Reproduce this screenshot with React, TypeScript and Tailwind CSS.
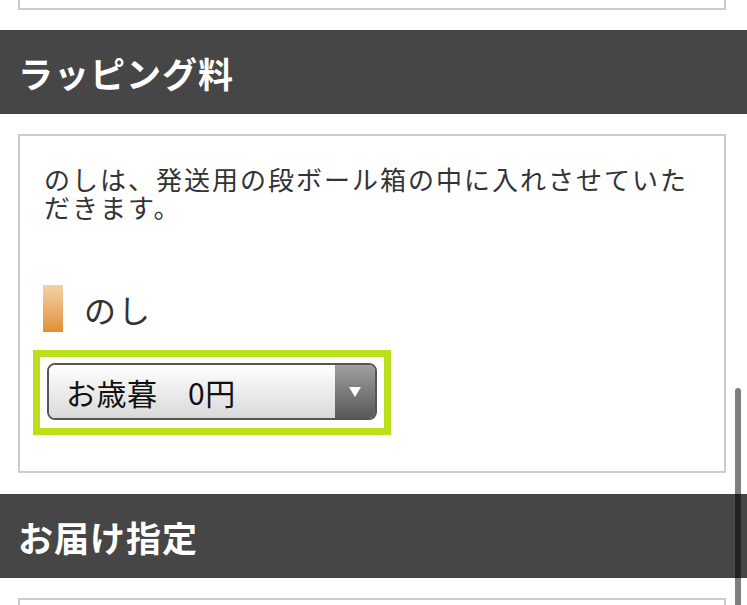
import { useState } from 'react'

const jp = { fontFamily: '"Noto Sans CJK JP", "Noto Sans", sans-serif' }

function SectionHeader({ title }: { title: string }) {
  return (
    <div className="h-[84px] bg-[#464646] flex items-center px-[18px]">
      <h2 className="text-[35px] font-bold text-white tracking-[1px] leading-none">{title}</h2>
    </div>
  )
}

function App() {
  const [noshi] = useState('お歳暮　0円')

  return (
    <div className="relative w-[747px] h-[605px] overflow-hidden bg-white" style={jp}>
      {/* 前のボックスの下端 */}
      <div className="ml-[18px] mr-[21px] h-[10px] border-2 border-t-0 border-[#cccccc]"></div>

      <div className="mt-[20px]">
        <SectionHeader title="ラッピング料" />
      </div>

      <div className="mt-[20px] ml-[18px] mr-[21px] h-[339px] border-2 border-[#cccccc] pt-[29px] px-[24px]">
        <p className="text-[26px] leading-[28px] tracking-[2px] text-[#333333]">
          のしは、発送用の段ボール箱の中に入れさせていただきます。
        </p>

        <div className="mt-[64px] flex items-center h-[47px]">
          <div className="w-[20px] h-[47px] -ml-[1px] bg-gradient-to-b from-[#f3d1a6] to-[#e0902f]"></div>
          <span className="ml-[21px] text-[32px] tracking-[2px] text-[#333333] leading-none">のし</span>
        </div>

        <div className="mt-[18px] -ml-[11px] w-[358px] h-[85px] border-[7px] border-[#b9e01b] pl-[7px] pr-[7px] pt-[6px]">
          <div className="flex h-[57px] rounded-[8px] border-2 border-[#555555] overflow-hidden">
            <div className="flex-1 flex items-center pl-[17px] bg-gradient-to-b from-[#ffffff] to-[#d9d9d9]">
              <span className="text-[30px] tracking-[0.5px] text-[#111111] leading-none">{noshi}</span>
            </div>
            <div className="w-[40px] flex items-center justify-center bg-gradient-to-b from-[#a0a0a0] to-[#595959]">
              <svg width="12" height="10" viewBox="0 0 12 10">
                <path d="M0 0 L12 0 L6 10 Z" fill="#ffffff" />
              </svg>
            </div>
          </div>
        </div>
      </div>

      <div className="mt-[21px]">
        <SectionHeader title="お届け指定" />
      </div>

      <div className="mt-[20px] ml-[18px] mr-[21px] h-[40px] border-2 border-b-0 border-[#cccccc]"></div>

      {/* スクロールバー */}
      <div className="absolute left-[735px] top-[388px] w-[6px] h-[240px] rounded-full bg-black/50"></div>
    </div>
  )
}

export default App
